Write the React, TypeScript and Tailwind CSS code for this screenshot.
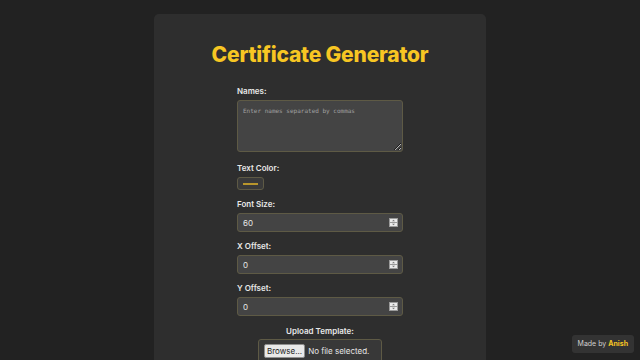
import React from "react";

const Spinner = () => (
  <svg width="9" height="9" viewBox="0 0 9 9" className="shrink-0">
    <rect x="0.5" y="0.5" width="8" height="8" fill="#e9e9e9" stroke="#9a9a9a" />
    <line x1="1" y1="4.5" x2="8" y2="4.5" stroke="#9a9a9a" />
    <path d="M3 3.2 L4.5 1.8 L6 3.2 Z" fill="#777" />
    <path d="M3 5.8 L4.5 7.2 L6 5.8 Z" fill="#777" />
  </svg>
);

const NumberField = ({ label, value }: { label: string; value: string }) => (
  <div className="flex flex-col">
    <label className="text-[8px] font-semibold text-[#e8e8e8] leading-none mb-[5px]">{label}</label>
    <div className="flex items-center justify-between h-[19px] pl-[5px] pr-[4px] rounded-[3px] border border-[#5e5a45] bg-[#444444]">
      <input
        defaultValue={value}
        className="w-full bg-transparent outline-none text-[8px] text-[#e6e6e6]"
      />
      <Spinner />
    </div>
  </div>
);

const App = () => {
  return (
    <div
      className="w-[640px] h-[360px] overflow-hidden bg-[#222222] relative"
      style={{ fontFamily: "Inter, 'Noto Sans', sans-serif" }}
    >
      <div className="mx-auto mt-[14px] w-[332px] h-[360px] rounded-[5px] bg-[#2e2e2e] flex flex-col items-center">
        <h1 className="mt-[30px] text-[21px] font-extrabold text-[#f7c623] tracking-[-0.2px] leading-none">
          Certificate Generator
        </h1>

        <div className="w-[166px] mt-[22px] flex flex-col">
          <label className="text-[8px] font-semibold text-[#e8e8e8] leading-none mb-[5px]">Names:</label>
          <textarea
            placeholder="Enter names separated by commas"
            className="h-[52px] rounded-[3px] border border-[#5e5a45] bg-[#444444] px-[5px] py-[5px] text-[6px] text-[#e6e6e6] placeholder:text-[#a0a0a0] outline-none resize-y"
            style={{ fontFamily: "'DejaVu Sans Mono', monospace" }}
          />

          <label className="mt-[12px] text-[8px] font-semibold text-[#e8e8e8] leading-none mb-[5px]">Text Color:</label>
          <div className="w-[27px] h-[13px] rounded-[3px] border border-[#5e5a45] bg-[#3a3a3a] flex items-center justify-center">
            <div className="w-[15px] h-[2px] bg-[#b9962c]" />
          </div>

          <div className="mt-[10px] flex flex-col gap-[10px]">
            <NumberField label="Font Size:" value="60" />
            <NumberField label="X Offset:" value="0" />
            <NumberField label="Y Offset:" value="0" />
          </div>
        </div>

        <label className="mt-[11px] text-[8px] font-semibold text-[#e8e8e8] leading-none">Upload Template:</label>
        <div className="mt-[4px] w-[124px] h-[24px] rounded-[3px] border border-[#5e5a45] bg-[#383838] flex items-center pl-[5px] gap-[3px] shrink-0">
          <span className="text-[8px] leading-none px-[2px] py-[2px] bg-[#e9e9e9] text-[#222] border border-[#8f8f8f] rounded-[2px]">
            Browse...
          </span>
          <span className="text-[8px] text-[#e6e6e6] leading-none">No file selected.</span>
        </div>
      </div>

      <div className="absolute right-[6px] bottom-[7px] h-[18px] px-[6px] rounded-[3px] bg-[#333333] flex items-center text-[7px] text-[#cfcfcf]">
        Made by&nbsp;<span className="text-[#f7c623] font-bold">Anish</span>
      </div>
    </div>
  );
};

export default App;
